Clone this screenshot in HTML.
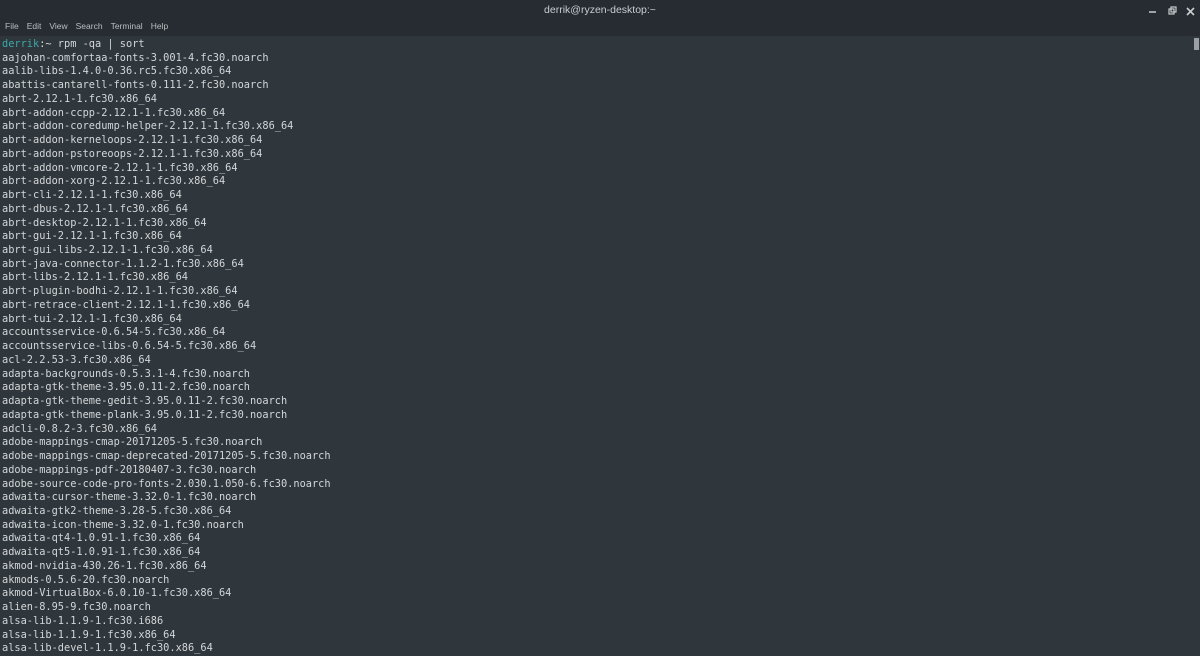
<!DOCTYPE html>
<html><head><meta charset="utf-8"><style>
html,body{margin:0;padding:0;width:1200px;height:656px;overflow:hidden;background:#2f363c;}
#hdr{position:absolute;left:0;top:0;width:1200px;height:36px;background:#262c31;}
#title{position:absolute;top:4px;left:0;width:1200px;text-align:center;font:10.5px "Liberation Sans",sans-serif;color:#c8cdd0;}
#menu{position:absolute;top:21px;left:5px;font:8.5px "Liberation Sans",sans-serif;color:#b9bec1;word-spacing:0;}
#menu span{margin-right:8px;}
#term{position:absolute;left:2px;top:38px;font:10.3px/13.73px "DejaVu Sans Mono","Liberation Mono",monospace;color:#d3d7d9;white-space:pre;}
.p{color:#3aa9a6}
#sb{position:absolute;left:1194px;top:38px;width:5px;height:12px;background:#9aa0a4;}
</style></head><body>
<div id="hdr"></div>
<div id="title">derrik@ryzen-desktop:~</div>
<div id="menu"><span>File</span><span>Edit</span><span>View</span><span>Search</span><span>Terminal</span><span>Help</span></div>
<svg style="position:absolute;left:1145px;top:4px" width="55" height="14">
<line x1="4" y1="8" x2="11" y2="8" stroke="#c8cdd0" stroke-width="1.5"/>
<rect x="24" y="5" width="5" height="5" fill="none" stroke="#c8cdd0" stroke-width="1.2"/>
<rect x="26" y="3" width="5" height="5" fill="none" stroke="#c8cdd0" stroke-width="1.2"/>
<path d="M42 4L49 11M49 4L42 11" stroke="#c8cdd0" stroke-width="1.6"/>
</svg>
<div id="sb"></div>
<div id="term"><span class="p">derrik</span>:~ rpm -qa | sort
aajohan-comfortaa-fonts-3.001-4.fc30.noarch
aalib-libs-1.4.0-0.36.rc5.fc30.x86_64
abattis-cantarell-fonts-0.111-2.fc30.noarch
abrt-2.12.1-1.fc30.x86_64
abrt-addon-ccpp-2.12.1-1.fc30.x86_64
abrt-addon-coredump-helper-2.12.1-1.fc30.x86_64
abrt-addon-kerneloops-2.12.1-1.fc30.x86_64
abrt-addon-pstoreoops-2.12.1-1.fc30.x86_64
abrt-addon-vmcore-2.12.1-1.fc30.x86_64
abrt-addon-xorg-2.12.1-1.fc30.x86_64
abrt-cli-2.12.1-1.fc30.x86_64
abrt-dbus-2.12.1-1.fc30.x86_64
abrt-desktop-2.12.1-1.fc30.x86_64
abrt-gui-2.12.1-1.fc30.x86_64
abrt-gui-libs-2.12.1-1.fc30.x86_64
abrt-java-connector-1.1.2-1.fc30.x86_64
abrt-libs-2.12.1-1.fc30.x86_64
abrt-plugin-bodhi-2.12.1-1.fc30.x86_64
abrt-retrace-client-2.12.1-1.fc30.x86_64
abrt-tui-2.12.1-1.fc30.x86_64
accountsservice-0.6.54-5.fc30.x86_64
accountsservice-libs-0.6.54-5.fc30.x86_64
acl-2.2.53-3.fc30.x86_64
adapta-backgrounds-0.5.3.1-4.fc30.noarch
adapta-gtk-theme-3.95.0.11-2.fc30.noarch
adapta-gtk-theme-gedit-3.95.0.11-2.fc30.noarch
adapta-gtk-theme-plank-3.95.0.11-2.fc30.noarch
adcli-0.8.2-3.fc30.x86_64
adobe-mappings-cmap-20171205-5.fc30.noarch
adobe-mappings-cmap-deprecated-20171205-5.fc30.noarch
adobe-mappings-pdf-20180407-3.fc30.noarch
adobe-source-code-pro-fonts-2.030.1.050-6.fc30.noarch
adwaita-cursor-theme-3.32.0-1.fc30.noarch
adwaita-gtk2-theme-3.28-5.fc30.x86_64
adwaita-icon-theme-3.32.0-1.fc30.noarch
adwaita-qt4-1.0.91-1.fc30.x86_64
adwaita-qt5-1.0.91-1.fc30.x86_64
akmod-nvidia-430.26-1.fc30.x86_64
akmods-0.5.6-20.fc30.noarch
akmod-VirtualBox-6.0.10-1.fc30.x86_64
alien-8.95-9.fc30.noarch
alsa-lib-1.1.9-1.fc30.i686
alsa-lib-1.1.9-1.fc30.x86_64
alsa-lib-devel-1.1.9-1.fc30.x86_64</div>
</body></html>
